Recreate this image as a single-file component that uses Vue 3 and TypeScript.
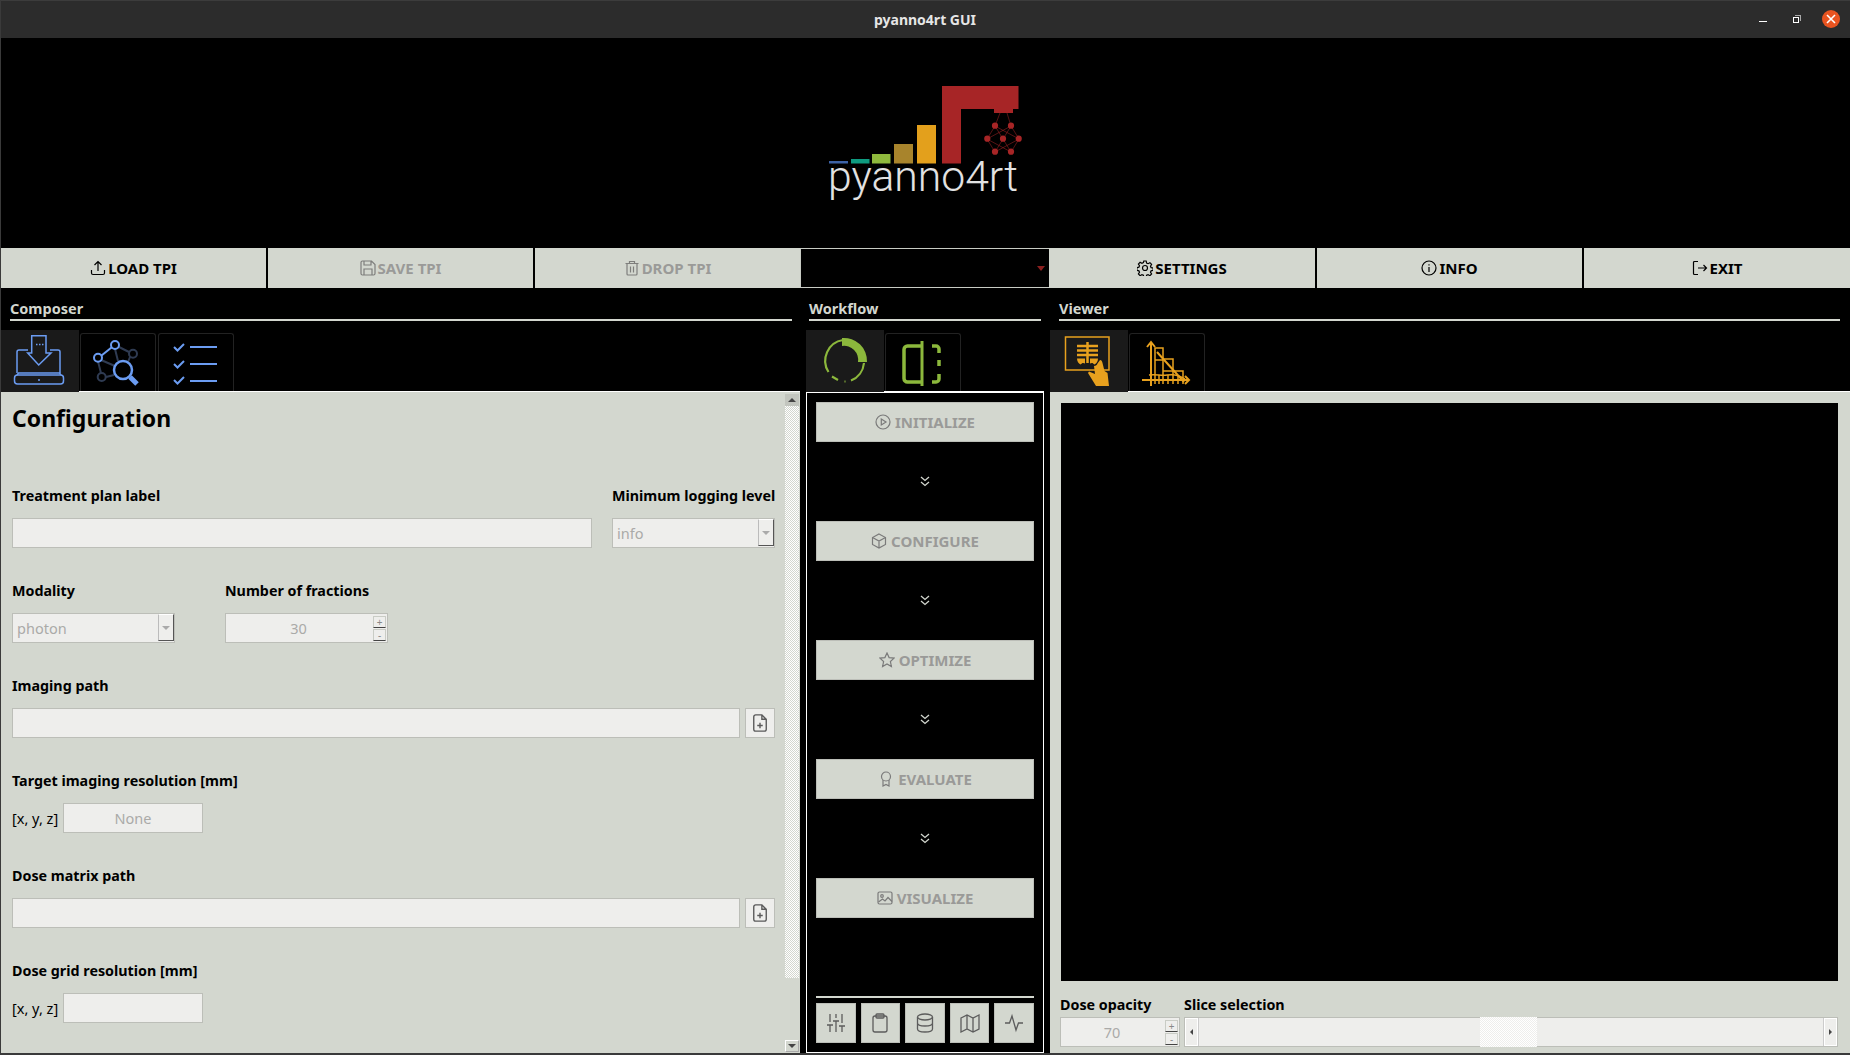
<script setup lang="ts">
const steps = ['INITIALIZE', 'CONFIGURE', 'OPTIMIZE', 'EVALUATE', 'VISUALIZE']
</script>

<template>
  <div class="app">
    <header class="titlebar">
      <span class="title">pyanno4rt GUI</span>
      <div class="winctl">
        <span class="min"></span>
        <span class="max"><i></i></span>
        <span class="close">
          <svg width="12" height="12" viewBox="0 0 12 12"><path d="M2 2l8 8M10 2l-8 8" stroke="#fff" stroke-width="1.6" /></svg>
        </span>
      </div>
    </header>

    <section class="logo">
      <svg width="200" height="122" viewBox="825 82 200 122">
        <rect x="829" y="161" width="19" height="2.5" fill="#3d62a5" />
        <rect x="851" y="159" width="18.5" height="4.5" fill="#0e9b80" />
        <rect x="872" y="154" width="18.5" height="9.5" fill="#8fb93d" />
        <rect x="894" y="144" width="19" height="19.5" fill="#a8842c" />
        <rect x="917" y="125" width="19" height="38.5" fill="#e3a01c" />
        <path d="M942 86h76.500v23h-5.500v4h-19v-4h-33v54.500h-19z" fill="#a72526" />
        <g stroke="#a72526" stroke-width=".7" fill="none" opacity=".75">
          <path d="M1000 113l-5 13-8 13 8 13M1007 113l4 13 8 13-8 13M995 126l8 13 8-13M995 152l8-13 8 13M987 139l24-13M1019 139l-24-13M987 139l24 13M1019 139l-24 13" />
        </g>
        <g fill="#a72526">
          <circle cx="995" cy="125.700" r="3.100" />
          <circle cx="1011" cy="125.700" r="3.100" />
          <circle cx="987.300" cy="138.700" r="3.100" />
          <circle cx="1003" cy="138.700" r="3.100" />
          <circle cx="1018.700" cy="138.700" r="3.100" />
          <circle cx="995" cy="151.700" r="3.100" />
          <circle cx="1011" cy="151.700" r="3.100" />
        </g>
        <text x="828" y="190.500" class="logotext" textLength="190" lengthAdjust="spacingAndGlyphs">pyanno4rt</text>
      </svg>
    </section>

    <nav class="toolbar">
      <button class="tbtn">
        <svg class="ic" viewBox="0 0 16 16"><path d="M1.500 10v3a1.500 1.500 0 0 0 1.500 1.500h10a1.500 1.500 0 0 0 1.500-1.500v-3M8 11V1.500M4.500 5L8 1.500 11.500 5" /></svg>LOAD TPI
      </button>
      <button class="tbtn off">
        <svg class="ic" viewBox="0 0 16 16"><path d="M2.500 1h9L15 4.500V13.500a1.500 1.500 0 0 1-1.500 1.500h-11A1.500 1.500 0 0 1 1 13.500v-11A1.500 1.500 0 0 1 2.500 1zM4 1v4h7V1M4 15V9h8v6" /></svg>SAVE TPI
      </button>
      <button class="tbtn off">
        <svg class="ic" viewBox="0 0 16 16"><path d="M1.500 3.500h13M5.500 3.500V1.500h5v2M3 3.500V14a1 1 0 0 0 1 1h8a1 1 0 0 0 1-1V3.500M6.500 6.500v6M9.500 6.500v6" /></svg>DROP TPI
      </button>
      <div class="tpicombo"><span class="redarrow"></span></div>
      <button class="tbtn">
        <svg class="ic" viewBox="0 0 16 16"><circle cx="8" cy="8" r="2.500" /><path d="M6.800 1h2.400l.4 2 1.500.7 1.800-1 1.700 1.700-1.100 1.800.6 1.400 2 .4v2.400l-2 .4-.6 1.500 1.100 1.700-1.700 1.700-1.800-1.100-1.500.6-.4 2H6.800l-.4-2-1.500-.6-1.800 1.100-1.700-1.700 1.100-1.700-.6-1.500-2-.4V7.600l2-.4.6-1.400-1.100-1.800 1.700-1.700 1.800 1 1.500-.7z" /></svg>SETTINGS
      </button>
      <button class="tbtn">
        <svg class="ic" viewBox="0 0 16 16"><circle cx="8" cy="8" r="7" /><path d="M8 7v5M8 4.200v1.300" /></svg>INFO
      </button>
      <button class="tbtn">
        <svg class="ic" viewBox="0 0 16 16"><path d="M6 1.500H2.500a1 1 0 0 0-1 1v11a1 1 0 0 0 1 1H6M6 8h8.500M11.500 5l3 3-3 3" /></svg>EXIT
      </button>
    </nav>

    <main class="panes">
      <section class="pane composer">
        <h2 class="panetitle">Composer</h2>
        <div class="tabs">
          <div class="tab active">
            <svg class="tabic blue" viewBox="-1 0 52 52">
              <path d="M2 38V17a2 2 0 0 1 2-2h9M35 15h8a2 2 0 0 1 2 2v21" />
              <path d="M16.700 .7H31V18h5L23.700 30 12.700 18h4zM21 9.500h1.500M24 9.500h1.500M27 9.500h1.500" />
              <rect x="-.5" y="40" width="49" height="9" rx="3" />
              <path d="M2 40l1.500-2h41l1.500 2M24 44v2" />
            </svg>
          </div>
          <div class="tab">
            <svg class="tabic blue" viewBox="0 0 52 52">
              <g class="dim">
                <circle cx="41" cy="16.700" r="4" /><circle cx="9.700" cy="40" r="4" />
                <path d="M6 24.500l3 11.500M14 40l8-2M27 10l10 5M38 20l-2 5M23 12l3 12M9 23l14 6" />
              </g>
              <circle cx="6" cy="20.700" r="4" stroke-width="2" /><circle cx="23" cy="8" r="4" stroke-width="2" />
              <path d="M9.500 18.500L19.500 10.500" stroke-width="2" />
              <circle cx="31" cy="33" r="9" stroke-width="2.500" />
              <path d="M38 40l7 7" stroke-width="5" />
            </svg>
          </div>
          <div class="tab">
            <svg class="tabic blue" viewBox="0 0 52 52">
              <path d="M4 10l3.500 3.500L14 7M4 27l3.500 3.500L14 24M4 43l3.500 3.500L14 40M20 10h27M20 27h27M20 44h27" stroke-width="2" />
            </svg>
          </div>
        </div>
        <div class="body config">
          <div class="form">
            <h1>Configuration</h1>
            <div class="row first">
              <div class="cell grow">
                <label>Treatment plan label</label>
                <div class="input"></div>
              </div>
              <div class="cell small">
                <label>Minimum logging level</label>
                <div class="input combo"><span>info</span><b class="drop"><i></i></b></div>
              </div>
            </div>
            <div class="row">
              <div class="cell small">
                <label>Modality</label>
                <div class="input combo"><span>photon</span><b class="drop"><i></i></b></div>
              </div>
              <div class="cell small gapl">
                <label>Number of fractions</label>
                <div class="input spin">
                  <span>30</span>
                  <div class="spinbtns"><b>+</b><b>-</b></div>
                </div>
              </div>
            </div>
            <div class="row">
              <div class="cell grow">
                <label>Imaging path</label>
                <div class="withbtn">
                  <div class="input fill"></div>
                  <button class="filebtn">
                    <svg viewBox="0 0 16 16"><path d="M9.500 1.500H4.500a1.500 1.500 0 0 0-1.500 1.500v10a1.500 1.500 0 0 0 1.500 1.500h7a1.500 1.500 0 0 0 1.500-1.500V5zM9.500 1.500V5H13M8 7.800v4.400M5.800 10h4.400" /></svg>
                  </button>
                </div>
              </div>
            </div>
            <div class="row">
              <div class="cell grow">
                <label>Target imaging resolution [mm]</label>
                <div class="xyz"><em>[x, y, z]</em><div class="input res">None</div></div>
              </div>
            </div>
            <div class="row">
              <div class="cell grow">
                <label>Dose matrix path</label>
                <div class="withbtn">
                  <div class="input fill"></div>
                  <button class="filebtn">
                    <svg viewBox="0 0 16 16"><path d="M9.500 1.500H4.500a1.500 1.500 0 0 0-1.500 1.500v10a1.500 1.500 0 0 0 1.500 1.500h7a1.500 1.500 0 0 0 1.500-1.500V5zM9.500 1.500V5H13M8 7.800v4.400M5.800 10h4.400" /></svg>
                  </button>
                </div>
              </div>
            </div>
            <div class="row">
              <div class="cell grow">
                <label>Dose grid resolution [mm]</label>
                <div class="xyz"><em>[x, y, z]</em><div class="input res"></div></div>
              </div>
            </div>
          </div>
          <div class="vscroll">
            <span class="sbtn"><i class="up"></i></span>
            <span class="strack"></span>
            <span class="sthumb"></span>
            <span class="sbtn lite"><i class="down"></i></span>
          </div>
        </div>
      </section>

      <section class="pane workflow">
        <h2 class="panetitle">Workflow</h2>
        <div class="tabs">
          <div class="tab active">
            <svg class="tabic green" viewBox="0 0 52 52">
              <path d="M24 5A21 21 0 0 0 9.500 37M13 41.500l6 3.500M25.500 46.500h1M32 45.500A21 21 0 0 0 45 28" stroke-width="2.200" fill="none" />
              <path d="M23 3a23 23 0 0 1 25 24H39A14 14 0 0 0 23 11z" class="solid" />
            </svg>
          </div>
          <div class="tab">
            <svg class="tabic green" viewBox="0 0 52 52">
              <path d="M25 4v45" stroke-width="3" />
              <path d="M25 9H10.500A3.500 3.500 0 0 0 7 12.500v29A3.500 3.500 0 0 0 10.500 45H25" stroke-width="3.500" />
              <path d="M35 9h4a3 3 0 0 1 3 3v4M42 23v6M42 37v5a3 3 0 0 1-3 3h-4" stroke-width="3.500" />
            </svg>
          </div>
        </div>
        <div class="body flow">
          <template v-for="(s, i) in steps" :key="s">
            <button class="stepbtn">
              <svg v-if="i === 0" class="ic" viewBox="0 0 16 16"><circle cx="8" cy="8" r="7" /><path d="M6.300 5l4.700 3-4.700 3z" /></svg>
              <svg v-if="i === 1" class="ic" viewBox="0 0 16 16"><path d="M8 1l6.500 3.500v7L8 15l-6.500-3.500v-7zM1.500 4.500L8 8l6.500-3.500M8 8v7" /></svg>
              <svg v-if="i === 2" class="ic" viewBox="0 0 16 16"><path d="M8 1l2.100 4.600 5 .5-3.700 3.400 1 5L8 12l-4.400 2.500 1-5L.9 6.100l5-.5z" /></svg>
              <svg v-if="i === 3" class="ic" viewBox="0 0 16 16"><circle cx="8" cy="5.500" r="4.500" /><path d="M5 9v6l3-1.500 3 1.500V9" /></svg>
              <svg v-if="i === 4" class="ic" viewBox="0 0 16 16"><rect x="1" y="2" width="14" height="12" rx="1.500" /><circle cx="5" cy="6" r="1.300" /><path d="M1.500 12L5.500 9l2.500 2 3-3.500 4 4" /></svg>
              {{ s }}
            </button>
            <div v-if="i < 4" class="chev">
              <svg width="10" height="11" viewBox="0 0 10 11"><path d="M1 1l4 3.500L9 1M1 6l4 3.500L9 6" fill="none" stroke="#d3d7cf" stroke-width="1.300" /></svg>
            </div>
          </template>
          <div class="spacer"></div>
          <hr class="sep" />
          <div class="minis">
            <button class="mini"><svg viewBox="0 0 20 20"><path d="M1 12h6M4 1v8M4 12v7M7 8h6M10 1v4M10 8v11M13 13h6M16 1v9M16 13v6" /></svg></button>
            <button class="mini"><svg viewBox="0 0 20 20"><rect x="3" y="3" width="14" height="16" rx="2" /><rect x="6" y="1" width="8" height="4" rx="1" /></svg></button>
            <button class="mini"><svg viewBox="0 0 20 20"><ellipse cx="10" cy="4" rx="7.500" ry="3" /><path d="M2.500 4v12c0 1.700 3.400 3 7.500 3s7.500-1.300 7.500-3V4M2.500 10c0 1.700 3.400 3 7.500 3s7.500-1.300 7.500-3" /></svg></button>
            <button class="mini"><svg viewBox="0 0 20 20"><path d="M1 5l6-3 6 3 6-3v14l-6 3-6-3-6 3zM7 2v14M13 5v14" /></svg></button>
            <button class="mini"><svg viewBox="0 0 20 20"><path d="M1 10h4.500L8 3l4 14 2.500-7H19" /></svg></button>
          </div>
        </div>
      </section>

      <section class="pane viewer">
        <h2 class="panetitle">Viewer</h2>
        <div class="tabs">
          <div class="tab active">
            <svg class="tabic orange" viewBox="0 0 52 52">
              <rect x="2.500" y="2" width="43.500" height="33" />
              <path d="M24.500 7v21M14 11h21M14 15.500h21M14 20h21" stroke-width="2.500" />
              <path d="M14 23.500h8v5c-2-1-3-.5-4.500 1-2-1-3.500-3-3.500-6zM35 23.500h-8v5c2-1 3-.5 4.500 1 2-1 3.500-3 3.500-6z" class="solid" />
              <path d="M37 25c1.500 0 2 1 2.500 3l2 8 3 2 1.500 13H33L25 38l1-1.500 6 2.500-1-8c2 0 3-1 3.500-2.500z" class="solid" />
            </svg>
          </div>
          <div class="tab">
            <svg class="tabic orange" viewBox="0 0 52 52" stroke-width="1.500">
              <path d="M10 49V5M6 10l4-5 4 5M1 43h47M44 39l4 4-4 4" stroke-width="2" />
              <path d="M14 47V11h8v36M22 22h10v25M32 34h10v13M14 23h8M22 34h10M18 38v9M27 38v9M37 38v9" />
              <path d="M16 15l27 30" stroke-width="2" />
              <path d="M8 38c8-1 12 1 18 0s12 0 18 4" />
            </svg>
          </div>
        </div>
        <div class="body view">
          <div class="canvas"></div>
          <div class="controls">
            <div class="opac">
              <label>Dose opacity</label>
              <div class="input spin">
                <span>70</span>
                <div class="spinbtns"><b>+</b><b>-</b></div>
              </div>
            </div>
            <div class="slice">
              <label>Slice selection</label>
              <div class="hscroll">
                <span class="hbtn"><i class="left"></i></span>
                <span class="htrack"><span class="hthumb"></span></span>
                <span class="hbtn"><i class="right"></i></span>
              </div>
            </div>
          </div>
        </div>
      </section>
    </main>
  </div>
</template>

<style>
html, body { margin: 0; background: #000; overflow: hidden; }
</style>

<style scoped>
.app {
  width: 1850px;
  height: 1055px;
  display: flex;
  flex-direction: column;
  background: #000;
  overflow: hidden;
  font-family: "Noto Sans", "Open Sans", sans-serif;
  color: #000;
  box-sizing: border-box;
  border-left: 1px solid #3a3a3a;
  border-bottom: 2px solid #3a3a3a;
}
.titlebar {
  height: 38px;
  flex: none;
  background: #2c2c2c;
  display: flex;
  align-items: center;
  justify-content: center;
  position: relative;
  border-top: 1px solid #3c3c3c;
  box-sizing: border-box;
}
.title { color: #e6e6e6; font-size: 14px; font-weight: 700; margin-left: -1px; }
.winctl { position: absolute; right: 10px; top: 9px; display: flex; align-items: center; }
.min { width: 8px; height: 1px; background: #fff; margin-right: 26px; margin-top: 4px; }
.max { width: 8px; height: 8px; position: relative; margin-right: 21px; }
.max::before { content: ""; position: absolute; left: 2px; top: 0; width: 5px; height: 5px; border-top: 1px solid #aaa; border-right: 1px solid #aaa; }
.max i { position: absolute; left: 0; top: 2px; width: 4px; height: 4px; border: 1px solid #fff; }
.close { width: 18px; height: 18px; border-radius: 50%; background: #e95420; display: flex; align-items: center; justify-content: center; }

.logo { height: 210px; flex: none; display: flex; align-items: flex-start; justify-content: center; box-sizing: border-box; padding: 44px 2px 0 0; }
.logo svg { display: block; }
.logotext { font-family: Roboto, "Noto Sans", sans-serif; font-size: 42px; font-weight: 300; fill: #e2e2e2; }

.toolbar { height: 40px; flex: none; display: flex; gap: 2px; }
button { font-family: inherit; }
.tbtn {
  width: 265px;
  height: 40px;
  flex: none;
  background: #d3d7cf;
  border: 0;
  padding: 0;
  display: flex;
  align-items: center;
  justify-content: center;
  gap: 2px;
  font-size: 15px;
  font-weight: 700;
  color: #000;
}
.tbtn:nth-child(5) { width: 266px; }
.tbtn:last-child { flex: 1; width: auto; }
.tbtn.off { color: #9a9a98; }
.tbtn.off .ic { color: #7e7e7c; }
.ic { width: 16px; height: 16px; fill: none; stroke: currentColor; stroke-width: 1.200; flex: none; }
.tpicombo {
  width: 249px;
  height: 40px;
  flex: none;
  margin: 0 -2px;
  box-sizing: border-box;
  background: #000;
  border: 1px solid #c8cbc4;
  border-right: 0;
  position: relative;
}
.redarrow { position: absolute; right: 4px; top: 17px; width: 0; height: 0; border: 4px solid transparent; border-top: 5px solid #8c2020; border-bottom: 0; }

.panes { flex: 1; min-height: 0; display: flex; }
.pane { display: flex; flex-direction: column; min-width: 0; }
.composer { width: 799px; flex: none; }
.workflow { width: 238px; margin-left: 6px; flex: none; }
.viewer { flex: 1; margin-left: 6px; }
.panetitle {
  margin: 0 8px 0 9px;
  height: 33px;
  box-sizing: border-box;
  padding-top: 12px;
  font-size: 14.500px;
  line-height: 17px;
  font-weight: 700;
  color: #d3d7cf;
  border-bottom: 2px solid #d3d7cf;
}
.workflow .panetitle { margin: 0 3px; }
.viewer .panetitle { margin: 0 10px 0 9px; }
.tabs { height: 70px; flex: none; display: flex; align-items: flex-end; gap: 2px; position: relative; z-index: 1; }
.tab {
  width: 76px;
  height: 58px;
  border: 1px solid #222;
  border-bottom: 0;
  border-radius: 3px 3px 0 0;
  box-sizing: border-box;
  display: flex;
  align-items: center;
  justify-content: center;
}
.tab.active {
  width: 78px;
  height: 62px;
  margin-bottom: -1px;
  margin-right: -1px;
  background: #1a1a1a;
  border: 0;
  border-radius: 0;
}
.tabic { width: 52px; height: 52px; fill: none; stroke-width: 1.500; overflow: visible; flex: none; }
.blue { stroke: #6b9cf2; }
.blue .dim { stroke: #2f3b52; stroke-width: 2; }
.green { stroke: #8cb83c; }
.orange { stroke: #e8a11e; }
.solid { stroke: none; }
.green .solid { fill: #8cb83c; }
.orange .solid { fill: #e8a11e; }

.body { flex: 1; min-height: 0; border-top: 1px solid #fff; box-sizing: border-box; }
.config { background: #d3d7cf; display: flex; overflow: hidden; }
.form { flex: 1; padding: 0 10px 0 11px; min-width: 0; }
.form h1 { margin: 11px 0 0; font-size: 23px; line-height: 30px; font-weight: 700; height: 30px; }
.row { display: flex; height: 95px; }
.row.first { margin-top: 53px; gap: 20px; }
.cell { display: flex; flex-direction: column; }
.grow { flex: 1; min-width: 0; }
.small { width: 163px; flex: none; }
.gapl { margin-left: 50px; }
label { font-size: 14.300px; font-weight: 700; line-height: 19px; height: 32px; display: block; color: #000; white-space: nowrap; }
.input {
  height: 30px;
  flex: none;
  box-sizing: border-box;
  background: #eeeeec;
  border: 1px solid #bcbeb8;
  font-size: 14.500px;
  color: #aaaaa8;
  display: flex;
  align-items: center;
}
.combo { padding-left: 4px; position: relative; }
.drop {
  position: absolute;
  right: 0;
  top: 0;
  width: 16px;
  height: 27px;
  box-sizing: border-box;
  background: #eeeeec;
  border: 1px solid #fff;
  border-right: 1px solid #555;
  border-bottom: 1px solid #555;
  border-left-color: #bbb;
  display: flex;
  align-items: center;
  justify-content: center;
}
.drop i { width: 0; height: 0; border: 4px solid transparent; border-top: 4px solid #aaa; border-bottom: 0; }
.spin { position: relative; justify-content: center; padding-right: 16px; }
.spinbtns { position: absolute; right: 1px; top: 2px; width: 13px; display: flex; flex-direction: column; }
.spinbtns b { height: 12px; font-size: 10px; line-height: 10px; font-weight: 400; text-align: center; color: #888; border: 1px solid #c9ccc5; border-bottom: 1px solid #444; box-sizing: border-box; background: #eeeeec; margin-bottom: 1px; }
.withbtn { display: flex; gap: 5px; }
.fill { flex: 1; }
.filebtn {
  width: 30px;
  height: 30px;
  padding: 0;
  background: #eeeeec;
  border: 1px solid #bcbeb8;
  display: flex;
  align-items: center;
  justify-content: center;
}
.filebtn svg { width: 20px; height: 20px; fill: none; stroke: #5a5a5a; stroke-width: 1.100; }
.xyz { display: flex; align-items: center; gap: 5px; }
.xyz em { font-style: normal; font-size: 14.500px; width: 46px; white-space: nowrap; }
.res { width: 140px; justify-content: center; }

.vscroll { width: 14px; flex: none; margin-right: 1px; padding: 2px 0 1px; display: flex; flex-direction: column; box-sizing: border-box; }
.sbtn { height: 12px; flex: none; background: #c2c5be; display: flex; align-items: center; justify-content: center; }
.sbtn.lite { background: #d3d7cf; border: 1px solid #fff; border-right-color: #aaa; border-bottom-color: #aaa; box-sizing: border-box; }
.sbtn i { width: 0; height: 0; border: 4px solid transparent; }
.sbtn .up { border-bottom: 4px solid #444; border-top: 0; }
.sbtn .down { border-top: 4px solid #444; border-bottom: 0; }
.strack { height: 572px; flex: none; background-image: repeating-conic-gradient(#d3d7cf 0 25%, #fff 0 50%); background-size: 2px 2px; }
.sthumb { flex: 1; background: #d3d7cf; }

.flow {
  border: 1px solid #fff;
  border-top: 2px solid #fff;
  background: #000;
  display: flex;
  flex-direction: column;
  align-items: center;
  padding: 9px;
}
.stepbtn {
  width: 218px;
  height: 40px;
  flex: none;
  background: #d3d7cf;
  border: 1px solid #bcbeb8;
  color: #9a9a98;
  font-size: 15px;
  font-weight: 700;
  display: flex;
  align-items: center;
  justify-content: center;
  gap: 4px;
  padding: 0;
}
.stepbtn .ic { color: #7a7a7a; }
.chev { height: 79px; flex: none; display: flex; align-items: center; justify-content: center; }
.spacer { flex: 1; }
.sep { width: 100%; height: 2px; background: #d3d7cf; border: 0; margin: 0 0 5px; flex: none; }
.minis { display: flex; gap: 5px; width: 100%; }
.mini {
  flex: 1;
  height: 40px;
  padding: 0;
  background: #d3d7cf;
  border: 1px solid #bcbeb8;
  display: flex;
  align-items: center;
  justify-content: center;
}
.mini svg { width: 20px; height: 20px; fill: none; stroke: #5c5c5c; stroke-width: 1.300; }

.view { background: #d3d7cf; padding: 11px 12px 0 10px; display: flex; flex-direction: column; }
.canvas { height: 578px; background: #000; flex: none; margin-left: 1px; }
.controls { display: flex; gap: 4px; margin-top: 14px; }
.opac { width: 120px; flex: none; }
.controls label { height: 22px; }
.slice { flex: 1; min-width: 0; }
.hscroll { height: 30px; display: flex; border: 1px solid #bcbeb8; box-sizing: border-box; background: #eeeeec; }
.hbtn { width: 13px; box-sizing: border-box; background: #eeeeec; border: 1px solid #fff; flex: none; display: flex; align-items: center; justify-content: center; }
.hbtn i { width: 0; height: 0; border: 3px solid transparent; }
.hbtn .left { border-right: 3px solid #444; border-left: 0; }
.hbtn .right { border-left: 3px solid #444; border-right: 0; }
.htrack { flex: 1; position: relative; border-left: 1px solid #ccc; border-right: 1px solid #ccc; }
.hthumb { position: absolute; left: 281px; top: -1px; bottom: -1px; width: 57px; background-image: repeating-conic-gradient(#eeeeec 0 25%, #fff 0 50%); background-size: 2px 2px; }
</style>
